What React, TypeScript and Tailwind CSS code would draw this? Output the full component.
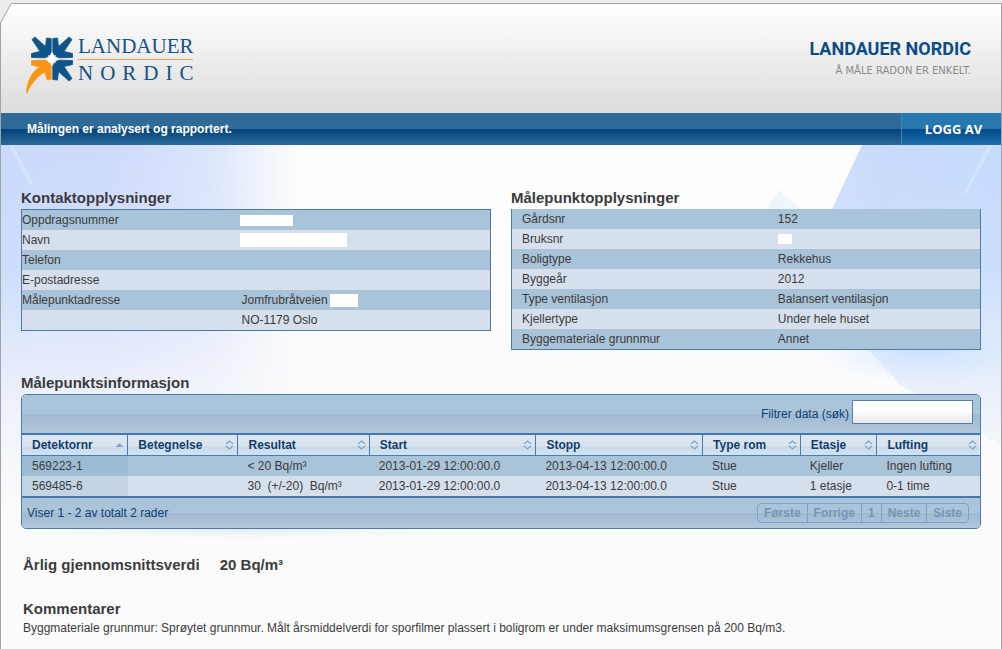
import React from 'react';

const contactRows = [
  { label: 'Oppdragsnummer', value: <span className="block h-[11px] w-[53px] bg-white" /> },
  { label: 'Navn', value: <span className="block h-[14px] w-[107px] bg-white" /> },
  { label: 'Telefon', value: null },
  { label: 'E-postadresse', value: null },
  {
    label: 'Målepunktadresse',
    value: <span className="flex items-center gap-0.5 pl-0.5">Jomfrubråtveien<span className="h-[13px] w-7 bg-white" /></span>,
  },
  { label: '', value: <span className="pl-0.5">NO-1179 Oslo</span> },
];

const pointRows = [
  { label: 'Gårdsnr', value: '152' },
  { label: 'Bruksnr', value: <span className="block h-[10px] w-[14px] bg-white" /> },
  { label: 'Boligtype', value: 'Rekkehus' },
  { label: 'Byggeår', value: '2012' },
  { label: 'Type ventilasjon', value: 'Balansert ventilasjon' },
  { label: 'Kjellertype', value: 'Under hele huset' },
  { label: 'Byggemateriale grunnmur', value: 'Annet' },
];

const columns = [
  { name: 'Detektornr', width: 'w-[11.1%]' },
  { name: 'Betegnelse', width: 'w-[11.5%]' },
  { name: 'Resultat', width: 'w-[13.7%]' },
  { name: 'Start', width: 'w-[17.4%]' },
  { name: 'Stopp', width: 'w-[17.4%]' },
  { name: 'Type rom', width: 'w-[10.2%]' },
  { name: 'Etasje', width: 'w-[8%]' },
  { name: 'Lufting', width: '' },
];

const detectors = [
  ['569223-1', '', '< 20 Bq/m³', '2013-01-29 12:00:00.0', '2013-04-13 12:00:00.0', 'Stue', 'Kjeller', 'Ingen lufting'],
  ['569485-6', '', '30  (+/-20)  Bq/m³', '2013-01-29 12:00:00.0', '2013-04-13 12:00:00.0', 'Stue', '1 etasje', '0-1 time'],
];

const pages = ['Første', 'Forrige', '1', 'Neste', 'Siste'];

const arrow = 'M-20 -19.500 L-17 -22 L-6.500 -12.500 L-5.500 -21 L-0.800 -20.500 L-0.800 -7 L-3 -3 L-7 -1.200 L-20.500 -1.500 L-20.500 -5.500 L-12 -7.500 Z';

function Logo() {
  return <a href="#" className="flex gap-[5px]" aria-label="Landauer Nordic">
      <svg className="mt-[3px] h-[60px] w-[47px]" viewBox="-26 -23 47 60" aria-hidden="true">
        <g fill="#0f5488" stroke="#0f5488" strokeWidth="0.800" strokeLinejoin="round">
          <path d={arrow} />
          <path d={arrow} transform="scale(-1 1)" />
          <path d={arrow} transform="scale(-1 -1)" />
        </g>
        <path d="M-20.500 1.500 L-7 1.200 L-3 3 L-0.800 7 L-0.800 20.500 L-5 20.500 L-7 13 C-15 17 -21 25 -25.500 34.500 C-25 22 -20 13 -12.500 8 L-20.500 6 Z" fill="#fb9416" stroke="#fb9416" strokeWidth="0.800" strokeLinejoin="round" />
        <path d="M0 -7 L1.200 -3 L4 -4 L3 -1.200 L7 0 L3 1.200 L4 4 L1.200 3 L0 7 L-1.200 3 L-4 4 L-3 1.200 L-7 0 L-3 -1.200 L-4 -4 L-1.200 -3 Z" fill="#fff" />
      </svg>
      <span className="font-['Liberation_Serif',serif] text-[21px] leading-[26px] text-[#14528a]">
        <span className="block">LANDAUER</span>
        <span className="block w-[115px] border-t border-[#f7a550] tracking-[7px] whitespace-nowrap">NORDIC</span>
      </span>
    </a>;
}

function SortIcon({ active }: { active: boolean }) {
  return <svg className="h-[10px] w-[9px] shrink-0" viewBox="0 0 9 10" aria-hidden="true">
      {active ? <path d="M0.500 7 L4.500 3 L8.500 7 Z" fill="#7ea6c8" /> : <path d="M1 4 L4.500 1 L8 4 M1 6 L4.500 9 L8 6" fill="none" stroke="#7fa6c6" strokeWidth="1.300" />}
    </svg>;
}

// Soft blue light behind the page content
function Backdrop() {
  return <svg className="absolute inset-0 -z-10 h-full w-full" viewBox="0 0 1000 504" preserveAspectRatio="none" aria-hidden="true">
      <defs>
        <linearGradient id="left" x1="0" x2="1" y1="0" y2="0">
          <stop offset="0" stopColor="#c9dafc" />
          <stop offset="0.350" stopColor="#cfdafc" />
          <stop offset="0.700" stopColor="#dbe5fb" />
          <stop offset="1" stopColor="#dbe5fb" stopOpacity="0" />
        </linearGradient>
        <linearGradient id="right" x1="0" x2="1" y1="0" y2="0">
          <stop offset="0" stopColor="#d3e3fc" />
          <stop offset="0.400" stopColor="#c9dafb" />
          <stop offset="1" stopColor="#c6dcfd" />
        </linearGradient>
        <linearGradient id="fade" x1="0" x2="0" y1="0" y2="1">
          <stop offset="0" stopColor="#fbfbfb" stopOpacity="0" />
          <stop offset="0.250" stopColor="#fbfbfb" stopOpacity="0.100" />
          <stop offset="0.500" stopColor="#fbfbfb" stopOpacity="0.700" />
          <stop offset="0.720" stopColor="#fbfbfb" />
        </linearGradient>
        <radialGradient id="glow">
          <stop offset="0" stopColor="#c6e0ff" />
          <stop offset="1" stopColor="#dfeaff" stopOpacity="0" />
        </radialGradient>
      </defs>
      <rect width="1000" height="504" fill="#fdfdfd" />
      <rect width="300" height="504" fill="url(#left)" />
      <path d="M861 0 H1000 V300 L900 240 L800 130 Z" fill="url(#right)" />
      <path d="M778 45 L802 66 H764 Z" fill="#edf5fc" />
      <path d="M8 0 L12 0 L34 42 L28 38 Z" fill="#d6e4fd" />
      <path d="M987 0 L992 0 L966 48 L962 50 Z" fill="#d3e4fe" />
      <rect width="1000" height="504" fill="url(#fade)" />
      <ellipse cx="925" cy="206" rx="120" ry="34" fill="url(#glow)" opacity="0.800" />
      <ellipse cx="240" cy="384" rx="200" ry="10" fill="url(#glow)" opacity="0.500" />
    </svg>;
}

function InfoTable({ id, title, rows, tableClass, labelClass }: {
  id: string;
  title: string;
  rows: { label: string; value: React.ReactNode }[];
  tableClass: string;
  labelClass: string;
}) {
  return <section>
      <h2 id={id} className="pb-0.5 text-[15px] leading-[19px] font-bold">{title}</h2>
      <table aria-labelledby={id} className={`w-full table-fixed border-separate border-spacing-0 border-[#4a7aae] ${tableClass}`}>
        <tbody>
          {rows.map((row, i) => <tr key={i} className="h-5 odd:bg-[#a9c3d8] even:bg-[#d5e0ec]">
              <th scope="row" className={`p-0 text-left font-normal ${labelClass}`}>{row.label}</th>
              <td className="p-0">{row.value}</td>
            </tr>)}
        </tbody>
      </table>
    </section>;
}

export default function App() {
  return <div className="min-h-screen bg-[#ececec] pt-[3px] font-['Liberation_Sans',Arial,sans-serif] text-xs leading-5 text-[#3b3b3d]">
      <div className="relative flex min-h-[calc(100vh-3px)] flex-col border-x border-t border-[#a3a3a3]">
        <svg className="absolute -top-px -left-px h-5 w-3" viewBox="0 0 12 20" aria-hidden="true">
          <path d="M0 0 H12 L0.500 20 H0 Z" fill="#ececec" />
          <path d="M11.500 0 L0.500 20" stroke="#a3a3a3" fill="none" />
        </svg>

        <header className="flex h-[109px] items-start justify-between bg-linear-to-b from-white to-[#dcdcdc] pr-[30px] pl-[25px]">
          <div className="pt-[29px]">
            <Logo />
          </div>
          <div className="pt-[33px] text-right">
            <div className="font-['Roboto',sans-serif] text-lg leading-6 font-bold text-[#0d4b86]">LANDAUER NORDIC</div>
            <div className="font-['DejaVu_Sans',sans-serif] text-[10px] leading-5 text-[#8a8a8a]">Å MÅLE RADON ER ENKELT.</div>
          </div>
        </header>

        <nav className="flex h-8 items-stretch">
          <div className="flex flex-1 items-center bg-[linear-gradient(#2f6b99_0_50%,#00427c_50%,#2d6a9a)] pl-[26px] font-bold text-white">
            Målingen er analysert og rapportert.
          </div>
          <button className="w-[100px] border-l border-[#3f86ba] bg-[linear-gradient(#2878b0_0_50%,#00498a_50%,#1f70ac)] pl-1 font-['Open_Sans',sans-serif] text-[13px] font-bold text-white">
            LOGG AV
          </button>
        </nav>

        <main className="relative isolate flex-1 px-5 pt-[43px] pb-3">
          <Backdrop />

          <div className="grid grid-cols-2 gap-5">
            <InfoTable id="contact" title="Kontaktopplysninger" rows={contactRows} tableClass="border" labelClass="w-[46.5%]" />
            <InfoTable id="point" title="Målepunktopplysninger" rows={pointRows} tableClass="border-x border-b" labelClass="w-[56.8%] pl-2.5" />
          </div>

          <section className="pt-[23px]">
            <h2 id="detectors" className="pb-0.5 text-[15px] leading-[19px] font-bold">Målepunktsinformasjon</h2>
            <div className="overflow-hidden rounded-[5px] border border-[#4a7aae]">
              <div className="flex h-[38px] items-center justify-end gap-[3px] bg-[linear-gradient(#aac5da_0_50%,#9fb9d0_50%,#b1c8dc)] pr-[7px] text-[#103e70]">
                <label htmlFor="filter">Filtrer data (søk)</label>
                <input id="filter" type="text" className="mb-1 h-6 w-[121px] border border-[#5580ae] bg-linear-to-b from-white from-40% to-[#e9e6ea] px-1 outline-none" />
              </div>
              <table aria-labelledby="detectors" className="w-full table-fixed border-separate border-spacing-0 border-y-2 border-[#4678b2]">
                <thead>
                  <tr className="h-[21px] bg-[linear-gradient(#dbe5f0_0_50%,#ccd9e7_50%,#d0e4f5)]">
                    {columns.map((col, i) => <th key={col.name} scope="col" className={`border-r border-b border-[#4a7aae] py-0 pr-[3px] pl-2.5 text-[#103e70] last:border-r-0 ${col.width}`}>
                        <button className="flex w-full items-center justify-between font-bold">
                          {col.name}
                          <SortIcon active={i === 0} />
                        </button>
                      </th>)}
                  </tr>
                </thead>
                <tbody>
                  {detectors.map((row) => <tr key={row[0]} className="h-5 odd:bg-[#a9c3d8] even:bg-[#d5e0ec]">
                      {row.map((cell, i) => <td key={i} className="py-0 pr-0 pl-[9px] whitespace-pre first:bg-[#5b91c5]/15 first:pl-2.5">{cell}</td>)}
                    </tr>)}
                </tbody>
              </table>
              <div className="flex h-[30px] items-center justify-between bg-[linear-gradient(#aac5da_0_50%,#9fb9d0_50%,#b1c8dc)] pr-[11px] pl-[5px] text-[#103e70]">
                <span>Viser 1 - 2 av totalt 2 rader</span>
                <div className="flex rounded-[4px] border border-[#7f9fc8] text-[#7895b5]">
                  {pages.map((page) => <button key={page} disabled className="h-[18px] border-r border-[#7f9fc8] px-1.5 font-bold leading-[18px] last:border-r-0">
                      {page}
                    </button>)}
                </div>
              </div>
            </div>
          </section>

          <div className="flex gap-5 pt-[26px] pl-0.5 text-[15px] leading-5 font-bold">
            <h2>Årlig gjennomsnittsverdi</h2>
            <span>20 Bq/m³</span>
          </div>

          <section className="pt-6 pl-0.5">
            <h2 className="text-[15px] leading-[19px] font-bold">Kommentarer</h2>
            <p>Byggmateriale grunnmur: Sprøytet grunnmur. Målt årsmiddelverdi for sporfilmer plassert i boligrom er under maksimumsgrensen på 200 Bq/m3.</p>
          </section>
        </main>
      </div>
    </div>;
}
